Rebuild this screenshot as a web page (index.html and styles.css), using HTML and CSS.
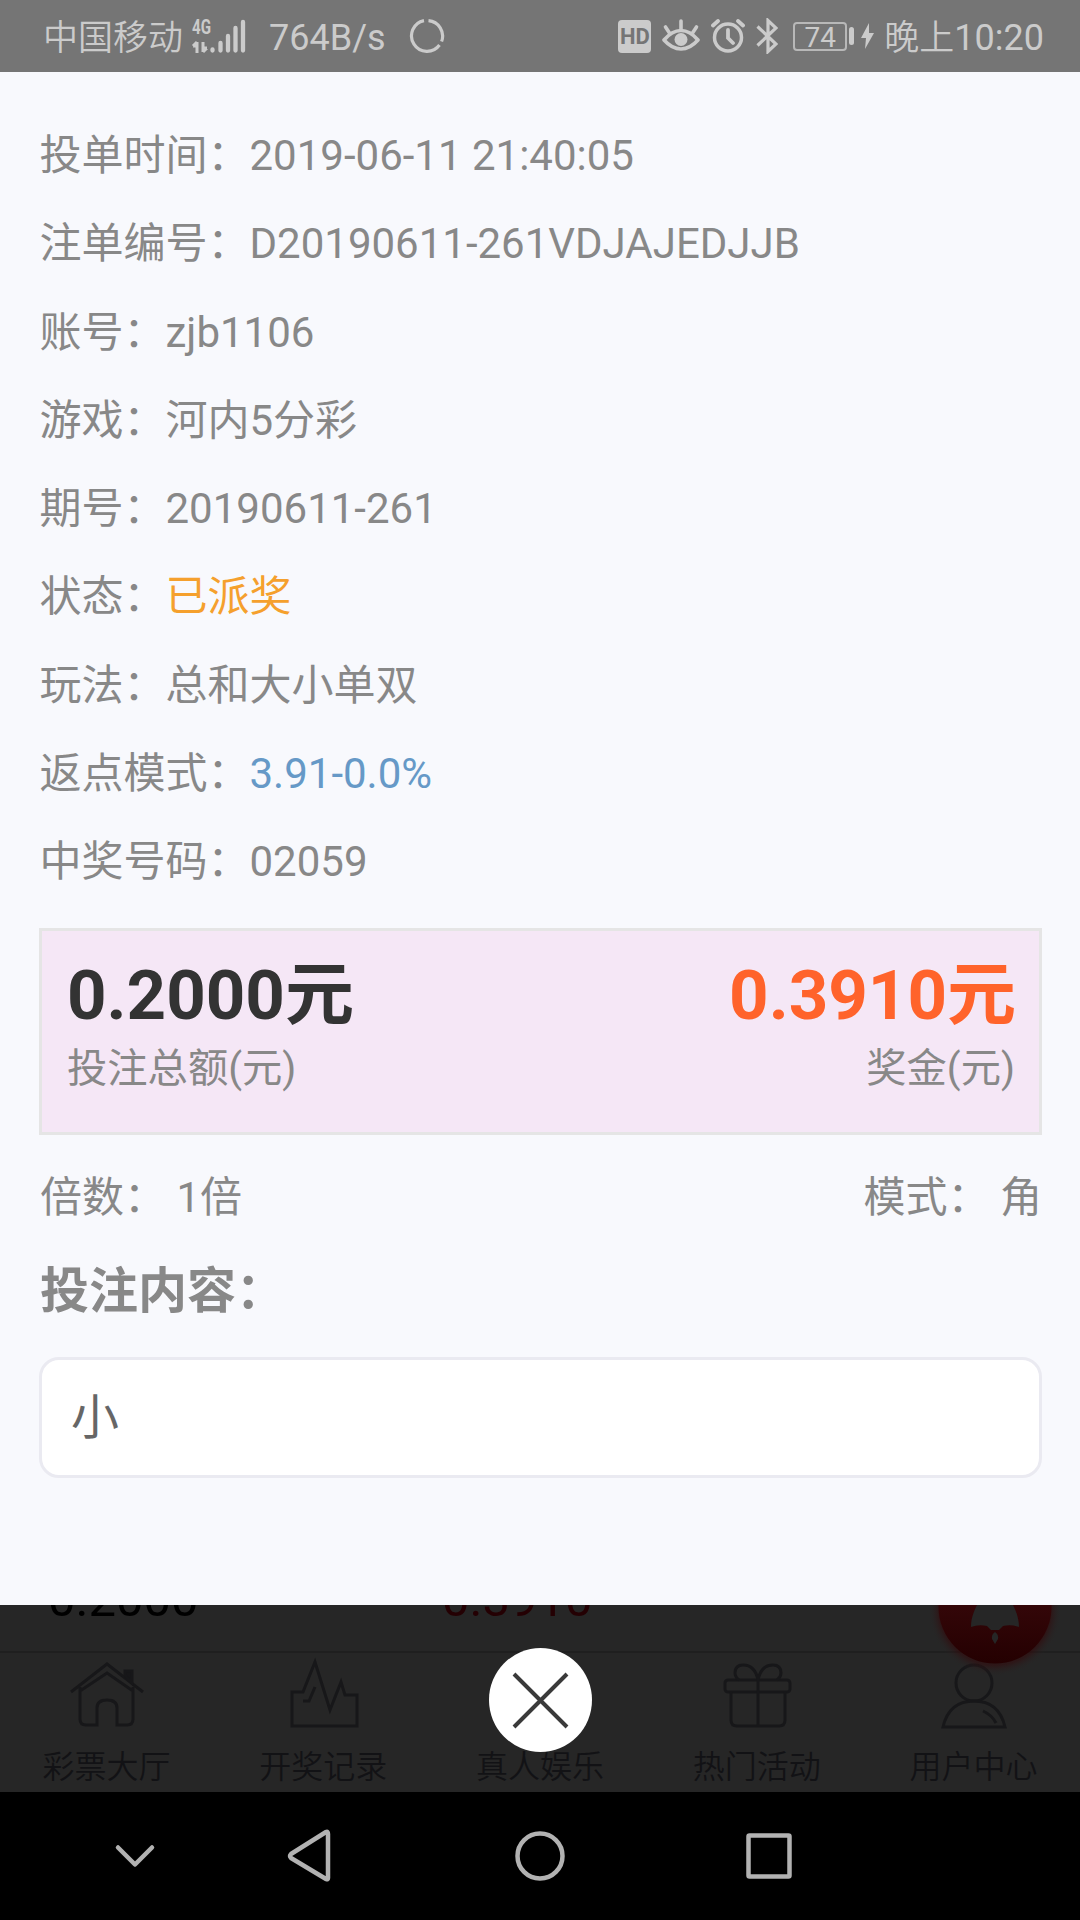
FILE: index.html
```html
<!DOCTYPE html>
<html lang="zh-CN">
<head>
    <meta charset="UTF-8">
    <meta name="viewport" content="width=device-width, initial-scale=1.0">
    <title>注单详情</title>
    <link rel="stylesheet" href="styles.css">
</head>
<body>
    <header class="status-bar">
        <span class="carrier">中国移动</span>
        <!-- 4G + signal bars -->
        <svg class="signal" width="54" height="36" viewBox="0 0 54 36">
            <text x="0" y="15.700" class="signal-text" textLength="19" lengthAdjust="spacingAndGlyphs">4G</text>
            <path d="M5 35V24M1 28l4-4M11 24v10M11 34l4-4M1 28h4M11 30h4" stroke="#cbcbcb" stroke-width="3" fill="none"/>
            <path d="M20.500 31.500v1M28.500 25v7.500M36 18v14.500M43.500 10v22.500M51 4v28.500" stroke="#cbcbcb" stroke-width="4.300" stroke-linecap="round"/>
        </svg>
        <span class="speed">764B/s</span>
        <svg class="spinner" width="36" height="36" viewBox="0 0 36 36">
            <path d="M19.500 2.600A15.500 15.500 0 0 1 32.600 23.500M30.500 27A15.500 15.500 0 1 1 15 2.600" stroke="#cbcbcb" stroke-width="3.200" fill="none"/>
        </svg>

        <div class="status-right">
            <span class="hd">HD</span>
            <svg class="eye" width="38" height="34" viewBox="0 0 38 34">
                <path d="M2 21Q10 11.500 19 11.500T36 21Q28 30 19 30T2 21z" stroke="#cbcbcb" stroke-width="3.600" stroke-linejoin="round" fill="none"/>
                <circle cx="19" cy="20.500" r="6.500" fill="#cbcbcb"/>
                <path d="M19 2v8M3.500 8l4 6M34.500 8l-4 6" stroke="#cbcbcb" stroke-width="3.600" stroke-linecap="round"/>
            </svg>
            <svg class="alarm" width="34" height="34" viewBox="0 0 34 34">
                <circle cx="17" cy="18.500" r="13.500" stroke="#cbcbcb" stroke-width="3.500" fill="none"/>
                <path d="M17 11v8l5 5M2 6.500L7 2M32 6.500L27 2" stroke="#cbcbcb" stroke-width="3.800" stroke-linecap="round" fill="none"/>
            </svg>
            <svg class="bluetooth" width="22" height="36" viewBox="0 0 22 36">
                <path d="M1.500 8.500L20 26l-8 7.500V2.500L20 10 1.500 27.500" stroke="#cbcbcb" stroke-width="3.200" fill="none"/>
            </svg>
            <span class="battery">74</span>
            <span class="battery-tip"></span>
            <svg class="bolt" width="13" height="28" viewBox="0 0 13 26">
                <path d="M8 0L0 15h5L4 26l9-16H8z" fill="#cbcbcb"/>
            </svg>
            <span class="clock">晚上<span class="time">10:20</span></span>
        </div>
    </header>

    <main class="detail">
        <p class="row">投单时间：2019-06-11 21:40:05</p>
        <p class="row">注单编号：D20190611-261VDJAJEDJJB</p>
        <p class="row">账号：zjb1106</p>
        <p class="row">游戏：河内5分彩</p>
        <p class="row">期号：20190611-261</p>
        <p class="row">状态：<span class="orange">已派奖</span></p>
        <p class="row">玩法：总和大小单双</p>
        <p class="row">返点模式：<span class="blue">3.91-0.0%</span></p>
        <p class="row">中奖号码：02059</p>

        <div class="amount-box">
            <div class="amount">
                <strong>0.2000元</strong>
                <span>投注总额(元)</span>
            </div>
            <div class="amount win">
                <strong>0.3910元</strong>
                <span>奖金(元)</span>
            </div>
        </div>

        <div class="multiple">
            <span>倍数： 1倍</span>
            <span>模式： 角</span>
        </div>
        <h3 class="content-title">投注内容：</h3>
        <div class="content-box">小</div>
    </main>

    <!-- page behind the mask -->
    <section class="behind">
        <div class="list-row">
            <div class="bets">
                <span class="bet-num">0.2000</span>
                <span class="win-num">0.3910</span>
            </div>
            <svg class="rocket" width="130" height="80" viewBox="0 0 130 80">
                <defs>
                    <radialGradient id="glow">
                        <stop offset="0.84" stop-color="#330a0c" stop-opacity="0.55"/>
                        <stop offset="1" stop-color="#262626" stop-opacity="0"/>
                    </radialGradient>
                    <linearGradient id="red" x1="0" y1="0" x2="0" y2="1">
                        <stop offset="0.5" stop-color="#330608"/>
                        <stop offset="1" stop-color="#240001"/>
                    </linearGradient>
                </defs>
                <circle cx="65" cy="4" r="67" fill="url(#glow)"/>
                <circle cx="65" cy="2" r="56.500" fill="url(#red)"/>
                <path d="M47 0C44 6 41 13 41 22q8-3 16-1l4 4h8l4-4q8-2 16 1C89 13 86 6 83 0z" fill="#262626"/>
                <path d="M65 27q4 3 3 7l-3 5-3-5q-1-4 3-7z" fill="#262626"/>
            </svg>
        </div>
        <nav class="tab-bar">
            <a class="tab">
                <svg width="74" height="74" viewBox="0 0 74 74">
                    <path d="M1 39L37 11l36 28M10 34v32q0 6 6 6h11V55q0-8 10-8t10 8v17h10q6 0 6-6V34M10 38L37 20l26 18"/>
                    <path class="chimney" d="M55 22v-4h7v12z"/>
                </svg>
                <span>彩票大厅</span>
            </a>
            <a class="tab">
                <svg width="74" height="74" viewBox="0 0 74 74">
                    <path d="M5 39h11L28 9l15 48 11-28 4 13h12v31H5zM16 48h6l6-14"/>
                </svg>
                <span>开奖记录</span>
            </a>
            <a class="tab">
                <svg width="74" height="74" viewBox="0 0 74 74"></svg>
                <span>真人娱乐</span>
            </a>
            <a class="tab">
                <svg width="74" height="74" viewBox="0 0 74 74">
                    <rect x="4" y="27" width="65" height="12" rx="3"/>
                    <path d="M10 39v28q0 6 6 6h42q6 0 6-6V39M37 27v46M37 27Q34 12 22 12q-8 0-8 8 0 4 4 7M37 27Q40 12 52 12q8 0 8 8 0 4-4 7"/>
                </svg>
                <span>热门活动</span>
            </a>
            <a class="tab">
                <svg width="74" height="74" viewBox="0 0 74 74">
                    <circle cx="36" cy="30" r="18"/>
                    <path d="M5 74Q11 48 36 48t31 26zM45 58q9 4 13 12"/>
                </svg>
                <span>用户中心</span>
            </a>
        </nav>
        <button class="close">
            <svg width="104" height="104" viewBox="0 0 104 104">
                <path d="M26 26l53 53M79 26L26 79" stroke="#3a3a3a" stroke-width="4"/>
            </svg>
        </button>
    </section>

    <footer class="android-nav">
        <svg width="1080" height="128" viewBox="0 0 1080 128">
            <g stroke="#b2b2b2" stroke-width="4.500" fill="none" stroke-linecap="round" stroke-linejoin="round">
                <path d="M118 55.500l17 17 17-17"/>
                <path d="M328 42v44q0 2-2 1L291 66q-2-2 0-4l35-22q2-1 2 2z"/>
                <circle cx="540" cy="64" r="22.500"/>
                <rect x="748.500" y="43.500" width="41" height="41" rx="1"/>
            </g>
        </svg>
    </footer>
</body>
</html>
```
FILE: styles.css
```css
* {
    box-sizing: border-box;
}

body {
    margin: 0;
    width: 1080px;
    height: 1920px;
    overflow: hidden;
    background: #000;
    font-family: Roboto, "Noto Sans CJK SC", sans-serif;
    font-size: 42px;
    color: #888;
}

/* status bar */
.status-bar {
    display: flex;
    align-items: center;
    height: 72px;
    padding: 0 36px 0 43px;
    background: #757575;
    color: #cbcbcb;
    font-size: 36px;
    line-height: 72px;
    white-space: nowrap;
}

.carrier {
    width: 141px;
    padding-top: 5px;
    font-size: 35px;
    font-weight: 350;
}

.signal {
    margin-left: 8px;
    overflow: visible;
}

.signal-text {
    font-size: 21px;
    font-weight: bold;
    fill: #cbcbcb;
}

.speed {
    width: 116px;
    margin-left: 23px;
    padding-top: 3px;
}

.spinner {
    margin-left: 24px;
}

.status-right {
    display: flex;
    align-items: center;
    margin-left: auto;
}

.hd {
    width: 33px;
    height: 33px;
    border-radius: 4px;
    background: #cbcbcb;
    color: #757575;
    font-size: 22px;
    font-weight: bold;
    line-height: 34px;
    text-align: center;
}

.eye {
    margin-left: 11px;
}

.alarm {
    margin-left: 11px;
}

.bluetooth {
    margin-left: 11px;
}

.battery {
    width: 54px;
    height: 29px;
    margin-left: 15px;
    border: 2px solid #b8b8b8;
    border-radius: 4px;
    font-size: 28px;
    line-height: 28px;
    text-align: center;
}

.battery-tip {
    width: 5px;
    height: 18px;
    margin-left: 2px;
    border-radius: 3px;
    background: #cbcbcb;
}

.bolt {
    margin-left: 7px;
}

.clock {
    margin-left: 10px;
    padding-top: 4px;
    font-size: 35px;
    font-weight: 350;
}

.time {
    font-size: 36px;
    font-weight: 400;
}

/* order detail */
.detail {
    height: 1533px;
    padding: 40px 38px 0 39px;
    background: #f8f9fd;
}

.row {
    height: 88.3px;
    margin: 0;
    line-height: 88.3px;
    padding-left: 0.5px;
}

.orange {
    color: #f5a02d;
}

.blue {
    color: #6699c7;
}

.amount-box {
    display: flex;
    justify-content: space-between;
    height: 207px;
    margin-top: 21px;
    padding: 24px 23px 0 25px;
    border: 3px solid #e5e5e5;
    background: #f5e7f6;
}

.amount strong,
.amount span {
    display: block;
}

.amount strong {
    color: #333;
    font-size: 69px;
    line-height: 82px;
}

.amount span {
    font-size: 40.3px;
    line-height: 64px;
}

.win {
    text-align: right;
}

.amount.win strong {
    color: #ff632b;
}

.amount.win span {
    padding-right: 1px;
}

.multiple {
    display: flex;
    justify-content: space-between;
    margin-top: 21px;
    padding: 0 0 0 1px;
    line-height: 84px;
}

.content-title {
    margin: 22px 0 0 1px;
    font-size: 49px;
    line-height: 60px;
}

.content-box {
    height: 121px;
    margin-top: 35px;
    padding-left: 29px;
    border: 3px solid #eaeaf1;
    border-radius: 20px;
    background: #fff;
    color: #666;
    font-size: 48px;
    line-height: 116px;
}

/* dimmed page */
.behind {
    position: relative;
    height: 187px;
    background: #262626;
}

.list-row {
    position: relative;
    height: 48px;
    border-bottom: 2px solid #1f1f1f;
}

/* scrolled under the detail panel, only the last few pixels show */
.bets {
    display: flex;
    height: 46px;
    padding-left: 48px;
    overflow: hidden;
    font-size: 49px;
    line-height: 56px;
}

.bets span {
    width: 394px;
    margin-top: -33px;
}

.bet-num {
    color: #000;
}

.win-num {
    color: #240003;
}

.rocket {
    position: absolute;
    top: 0;
    left: 930px;
    z-index: 1;
}

.tab-bar {
    display: flex;
    margin: 0 -2px;
}

.tab {
    flex: 1;
    display: flex;
    flex-direction: column;
    align-items: center;
    color: #121215;
    font-size: 32px;
    line-height: 48px;
}

.tab svg {
    margin-left: 2px;
    overflow: visible;
    fill: none;
    stroke: #171719;
    stroke-width: 3;
}

.tab .chimney {
    fill: #171719;
}

.tab span {
    margin-top: 16px;
    font-weight: 350;
}

.close {
    position: absolute;
    top: 43px;
    left: 489px;
    width: 103px;
    height: 104px;
    padding: 0;
    border: 0;
    border-radius: 50%;
    background: #fff;
    z-index: 2;
}

.close svg {
    display: block;
    margin-left: -1px;
}

.android-nav {
    height: 128px;
    background: #000;
}

.android-nav svg {
    display: block;
}
```
